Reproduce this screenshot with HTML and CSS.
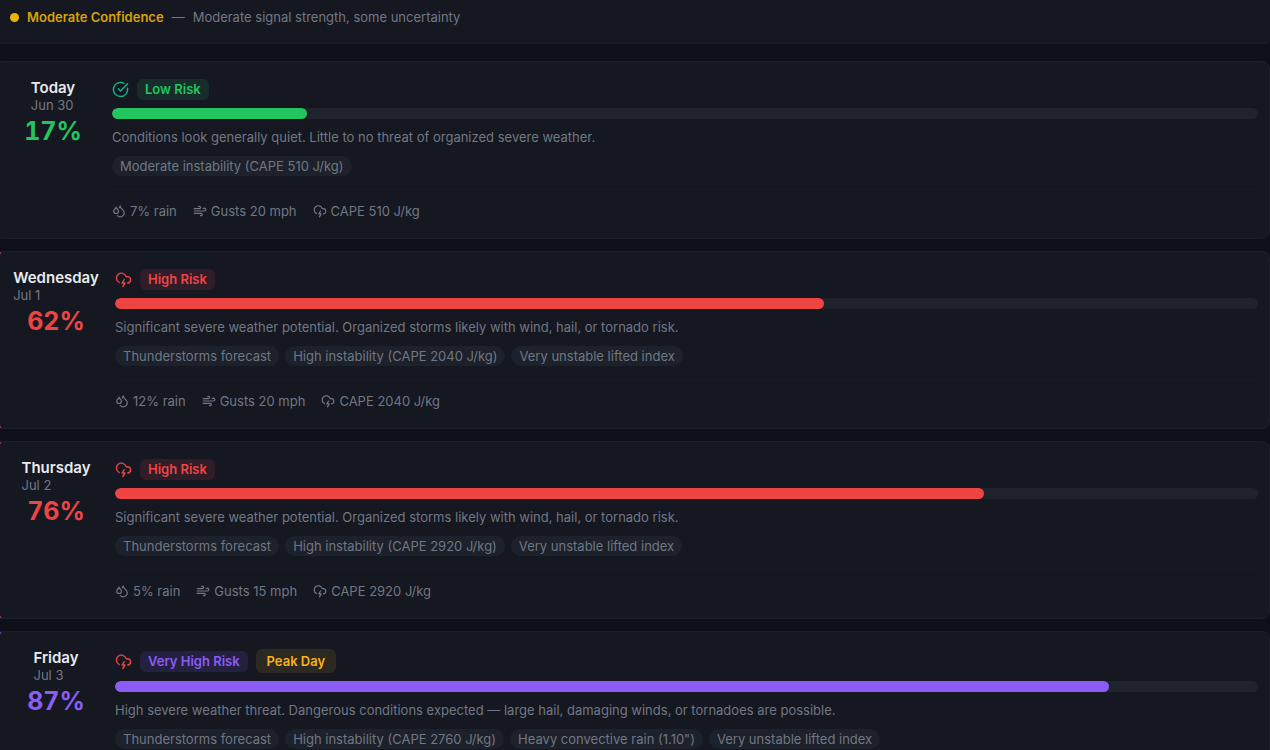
FILE: index.html
```html
<!DOCTYPE html>
<html lang="en">
<head>
    <meta charset="UTF-8">
    <title>Severe Weather Outlook</title>
    <link rel="stylesheet" href="styles.css">
</head>
<body>
    <svg class="sprite" aria-hidden="true">
        <symbol id="icon-check" viewBox="0 0 24 24">
            <path d="M21.801 10A10 10 0 1 1 17 3.335"/>
            <path d="m9 11 3 3L22 4"/>
        </symbol>
        <symbol id="icon-storm" viewBox="0 0 24 24">
            <path d="M6 16.326A7 7 0 1 1 15.71 8h1.79a4.5 4.5 0 0 1 .5 8.973"/>
            <path d="m13 12-3 5h4l-3 5"/>
        </symbol>
        <symbol id="icon-rain" viewBox="0 0 24 24">
            <path d="M7 16.3c2.2 0 4-1.83 4-4.05 0-1.16-.57-2.26-1.71-3.19S7.29 6.75 7 5.3c-.29 1.45-1.14 2.84-2.29 3.76S3 11.1 3 12.25c0 2.22 1.8 4.05 4 4.05z"/>
            <path d="M12.56 6.6A10.97 10.97 0 0 0 14 3.02c.5 2.5 2 4.9 4 6.5s3 3.5 3 5.5a6.98 6.98 0 0 1-11.91 4.97"/>
        </symbol>
        <symbol id="icon-wind" viewBox="0 0 24 24">
            <path d="M12.8 19.6A2 2 0 1 0 14 16H2"/>
            <path d="M17.5 8a2.5 2.5 0 1 1 2 4H2"/>
            <path d="M9.8 4.4A2 2 0 1 1 11 8H2"/>
        </symbol>
    </svg>

    <header class="confidence">
        <span class="confidence-dot"></span>
        <strong class="confidence-level">Moderate Confidence</strong>
        <span class="confidence-dash">—</span>
        <span>Moderate signal strength, some uncertainty</span>
    </header>

    <main class="outlook">
        <article class="day-card low">
            <div class="day-side">
                <div class="day-label">
                    <h2>Today</h2>
                    <p>Jun 30</p>
                </div>
                <div class="percent">17%</div>
            </div>
            <div class="day-body">
                <div class="badges">
                    <svg class="risk-icon"><use href="#icon-check"/></svg>
                    <span class="badge">Low Risk</span>
                </div>
                <div class="bar"><div class="bar-fill" style="width: 17%"></div></div>
                <p class="summary">Conditions look generally quiet. Little to no threat of organized severe weather.</p>
                <ul class="factors">
                    <li>Moderate instability (CAPE 510 J/kg)</li>
                </ul>
                <ul class="metrics">
                    <li><svg><use href="#icon-rain"/></svg>7% rain</li>
                    <li><svg><use href="#icon-wind"/></svg>Gusts 20 mph</li>
                    <li><svg><use href="#icon-storm"/></svg>CAPE 510 J/kg</li>
                </ul>
            </div>
        </article>

        <article class="day-card alert high">
            <div class="day-side">
                <div class="day-label">
                    <h2>Wednesday</h2>
                    <p>Jul 1</p>
                </div>
                <div class="percent">62%</div>
            </div>
            <div class="day-body">
                <div class="badges">
                    <svg class="risk-icon"><use href="#icon-storm"/></svg>
                    <span class="badge">High Risk</span>
                </div>
                <div class="bar"><div class="bar-fill" style="width: 62%"></div></div>
                <p class="summary">Significant severe weather potential. Organized storms likely with wind, hail, or tornado risk.</p>
                <ul class="factors">
                    <li>Thunderstorms forecast</li>
                    <li>High instability (CAPE 2040 J/kg)</li>
                    <li>Very unstable lifted index</li>
                </ul>
                <ul class="metrics">
                    <li><svg><use href="#icon-rain"/></svg>12% rain</li>
                    <li><svg><use href="#icon-wind"/></svg>Gusts 20 mph</li>
                    <li><svg><use href="#icon-storm"/></svg>CAPE 2040 J/kg</li>
                </ul>
            </div>
        </article>

        <article class="day-card alert high">
            <div class="day-side">
                <div class="day-label">
                    <h2>Thursday</h2>
                    <p>Jul 2</p>
                </div>
                <div class="percent">76%</div>
            </div>
            <div class="day-body">
                <div class="badges">
                    <svg class="risk-icon"><use href="#icon-storm"/></svg>
                    <span class="badge">High Risk</span>
                </div>
                <div class="bar"><div class="bar-fill" style="width: 76%"></div></div>
                <p class="summary">Significant severe weather potential. Organized storms likely with wind, hail, or tornado risk.</p>
                <ul class="factors">
                    <li>Thunderstorms forecast</li>
                    <li>High instability (CAPE 2920 J/kg)</li>
                    <li>Very unstable lifted index</li>
                </ul>
                <ul class="metrics">
                    <li><svg><use href="#icon-rain"/></svg>5% rain</li>
                    <li><svg><use href="#icon-wind"/></svg>Gusts 15 mph</li>
                    <li><svg><use href="#icon-storm"/></svg>CAPE 2920 J/kg</li>
                </ul>
            </div>
        </article>

        <article class="day-card alert very-high">
            <div class="day-side">
                <div class="day-label">
                    <h2>Friday</h2>
                    <p>Jul 3</p>
                </div>
                <div class="percent">87%</div>
            </div>
            <div class="day-body">
                <div class="badges">
                    <svg class="risk-icon"><use href="#icon-storm"/></svg>
                    <span class="badge">Very High Risk</span>
                    <span class="badge peak">Peak Day</span>
                </div>
                <div class="bar"><div class="bar-fill" style="width: 87%"></div></div>
                <p class="summary">High severe weather threat. Dangerous conditions expected — large hail, damaging winds, or tornadoes are possible.</p>
                <ul class="factors">
                    <li>Thunderstorms forecast</li>
                    <li>High instability (CAPE 2760 J/kg)</li>
                    <li>Heavy convective rain (1.10")</li>
                    <li>Very unstable lifted index</li>
                </ul>
            </div>
        </article>
    </main>
</body>
</html>
```

FILE: styles.css
```css
* {
    box-sizing: border-box;
}

body {
    margin: 0;
    height: 100vh;
    overflow: hidden;
    background-color: #0d1018;
    color: #717783;
    font-family: Inter, sans-serif;
    font-size: 13px;
}

h2, p, ul {
    margin: 0;
    padding: 0;
}

ul {
    list-style: none;
}

svg {
    fill: none;
    stroke: currentColor;
    stroke-width: 2;
    stroke-linecap: round;
    stroke-linejoin: round;
    flex-shrink: 0;
}

.sprite {
    display: none;
}

.confidence {
    display: flex;
    align-items: center;
    gap: 8px;
    padding: 7px 10px 16px;
    line-height: 20px;
    background-color: #151821;
    border-bottom: 1px solid #191c25;
    border-radius: 0 0 4px 0;
}

.confidence-dot {
    width: 9px;
    height: 9px;
    border-radius: 50%;
    background-color: #eab308;
}

.confidence-level {
    color: #d9a20b;
    font-weight: 600;
}

.outlook {
    display: flex;
    flex-direction: column;
    gap: 12px;
    margin: 17px 0 0 -5px;
}

.day-card {
    display: flex;
    gap: 17px;
    padding: 17px 11px 19px 15px;
    background-color: #151821;
    border: 1px solid #1c1f28;
    border-radius: 8px;
}

.low {
    --risk: #22c55e;
    --risk-bg: #182c2b;
    --icon: #10b981;
}

.high {
    --risk: #ef4444;
    --risk-bg: #301d27;
    --icon: #ef4444;
}

.very-high {
    --risk: #8b5cf6;
    --risk-bg: #242140;
    --icon: #ef4444;
}

.alert {
    border-left: 4px solid var(--risk);
}

.day-side {
    display: flex;
    flex-direction: column;
    align-items: center;
    width: 84px;
    flex-shrink: 0;
}

.day-side h2 {
    color: #e8eaee;
    font-size: 15px;
    font-weight: 600;
    line-height: 18px;
}

.day-side p {
    line-height: 16px;
}

.percent {
    color: var(--risk);
    font-size: 25px;
    font-weight: 700;
    line-height: 36px;
    font-variant-numeric: tabular-nums;
}

.day-body {
    flex: 1;
    min-width: 0;
}

.badges {
    display: flex;
    align-items: center;
    gap: 8px;
    margin-bottom: 8px;
}

.risk-icon {
    width: 17px;
    height: 17px;
    color: var(--icon);
}

.badge {
    padding: 0 8px;
    border-radius: 6px;
    background-color: var(--risk-bg);
    color: var(--risk);
    font-weight: 600;
    line-height: 21px;
}

.peak {
    padding: 0 11px;
    background-color: #2c2822;
    color: #fbb117;
    line-height: 24px;
}

.bar {
    height: 11px;
    border-radius: 6px;
    background-color: #1f232c;
    overflow: hidden;
}

.bar-fill {
    height: 100%;
    border-radius: 6px;
    background-color: var(--risk);
}

.summary {
    margin: 9px 0 10px;
    line-height: 18px;
}

.factors {
    display: flex;
    flex-wrap: wrap;
    gap: 6px;
}

.factors li {
    padding: 0 8px;
    border-radius: 10px;
    background-color: #1c212b;
    line-height: 20px;
}

.metrics {
    display: flex;
    gap: 16px;
    margin-top: 13px;
    padding-top: 13px;
    border-top: 1px solid #181b24;
    line-height: 16px;
}

.metrics li {
    display: flex;
    align-items: center;
    gap: 4px;
}

.metrics svg {
    width: 14px;
    height: 14px;
}
```
